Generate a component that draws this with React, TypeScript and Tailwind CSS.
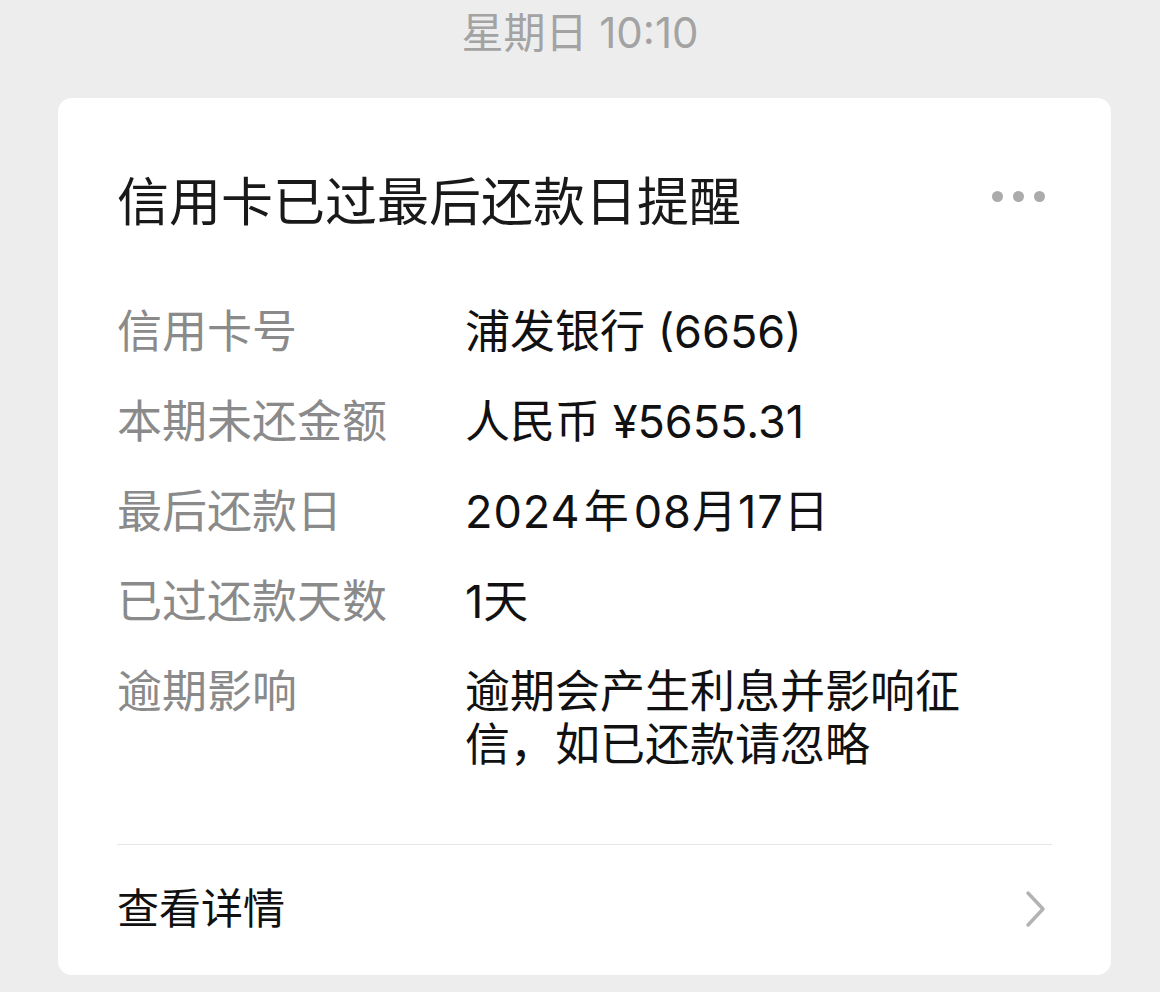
const rows: { label: string; value: string }[] = [
  { label: '信用卡号', value: '浦发银行 (6656)' },
  { label: '本期未还金额', value: '人民币 ¥5655.31' },
  { label: '最后还款日', value: '2024年08月17日' },
  { label: '已过还款天数', value: '1天' },
  { label: '逾期影响', value: '逾期会产生利息并影响征信，如已还款请忽略' },
];

const font = { fontFamily: '"Inter", "Noto Sans CJK SC", sans-serif' };

export default function App() {
  return (
    <div className="w-[1160px] h-[992px] bg-[#ededed] overflow-hidden" style={font}>
      <div className="pt-[8px] h-[57px] text-center text-[42px] leading-[50px] text-[#a3a3a3]">
        星期日 10:10
      </div>

      <div className="mt-[41px] ml-[58px] w-[1053px] rounded-[14px] bg-white px-[59px]">
        <div className="pt-[75px] flex items-center justify-between">
          <h1 className="text-[52px] leading-[60px] text-[#191919] font-normal">信用卡已过最后还款日提醒</h1>
          <div className="flex items-center gap-[10px] mr-[7px] mb-[14px]">
            <span className="w-[11px] h-[11px] rounded-full bg-[#ababab]" />
            <span className="w-[11px] h-[11px] rounded-full bg-[#ababab]" />
            <span className="w-[11px] h-[11px] rounded-full bg-[#ababab]" />
          </div>
        </div>

        <div className="mt-[72px] flex flex-col gap-[37px]">
          {rows.map((row) => (
            <div key={row.label} className="flex text-[45px] leading-[53px]">
              <div className="w-[348px] shrink-0 text-[#8a8a8a]">{row.label}</div>
              <div className="w-[525px] text-[#111111]">
                {row.label === '最后还款日' ? (
                  <span className="tracking-[1px]">
                    2024<span className="ml-[3px] mr-[4px]">年</span>08月17日
                  </span>
                ) : (
                  row.value
                )}
              </div>
            </div>
          ))}
        </div>

        <div className="mt-[73px] h-px bg-[#e6e6e6]" />

        <div className="pt-[39px] pb-[41px] flex items-center justify-between">
          <span className="text-[42px] leading-[50px] text-[#111111]">查看详情</span>
          <svg width="26" height="40" viewBox="0 0 26 40" className="mr-[3px]">
            <path d="M5 4 L20 20 L5 36" fill="none" stroke="#b3b3b3" strokeWidth="3.5" strokeLinecap="round" strokeLinejoin="round" />
          </svg>
        </div>
      </div>
    </div>
  );
}
